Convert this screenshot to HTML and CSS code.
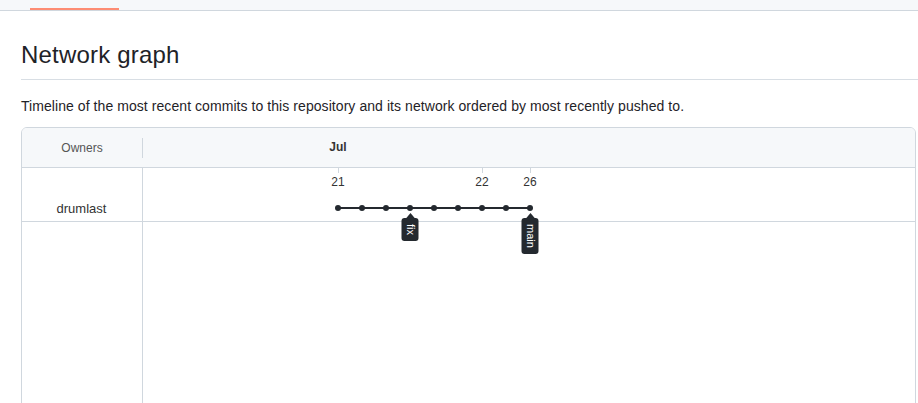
FILE: index.html
```html
<!DOCTYPE html>
<html lang="en">
<head>
<meta charset="utf-8">
<title>Network graph</title>
<link rel="stylesheet" href="styles.css">
</head>
<body>
<div class="topbar"><span class="tab-underline"></span></div>
<main class="content">
  <h2 class="page-title">Network graph</h2>
  <p class="page-desc">Timeline of the most recent commits to this repository and its network ordered by most recently pushed to.</p>
  <section class="graph">
    <div class="graph-head">
      <div class="head-owners">Owners</div>
      <div class="head-timeline">
        <span class="month" style="left:195px">Jul</span>
      </div>
    </div>
    <div class="graph-body">
      <div class="owners-col">
        <div class="owner-row">drumlast</div>
      </div>
      <div class="timeline-col">
        <div class="timeline-row">
          <svg class="commits" width="600" height="53" viewBox="0 0 600 53" aria-hidden="true">
            <g stroke="#d0d7de" stroke-width="1">
              <line x1="195.5" y1="0" x2="195.5" y2="5"/>
              <line x1="339.5" y1="0" x2="339.5" y2="5"/>
              <line x1="387.5" y1="0" x2="387.5" y2="5"/>
            </g>
            <line x1="195" y1="40" x2="387" y2="40" stroke="#24292f" stroke-width="2"/>
            <g fill="#24292f">
              <circle cx="195" cy="40" r="3"/>
              <circle cx="219" cy="40" r="3"/>
              <circle cx="243" cy="40" r="3"/>
              <circle cx="267" cy="40" r="3"/>
              <circle cx="291" cy="40" r="3"/>
              <circle cx="315" cy="40" r="3"/>
              <circle cx="339" cy="40" r="3"/>
              <circle cx="363" cy="40" r="3"/>
              <circle cx="387" cy="40" r="3"/>
            </g>
          </svg>
          <span class="day" style="left:195px">21</span>
          <span class="day" style="left:339px">22</span>
          <span class="day" style="left:387px">26</span>
          <span class="branch-tag" style="left:267px">fix</span>
          <span class="branch-tag" style="left:387px">main</span>
        </div>
      </div>
    </div>
  </section>
</main>
</body>
</html>
```
FILE: styles.css
```css
html, body {
  margin: 0;
  padding: 0;
  overflow: hidden;
  background: #ffffff;
}

body {
  font-family: "Liberation Sans", Arial, sans-serif;
  color: #1f2328;
}

.topbar {
  height: 10px;
  background: #f6f8fa;
  border-bottom: 1px solid #d0d7de;
  display: flex;
  align-items: flex-end;
}

.tab-underline {
  display: block;
  margin-left: 30px;
  width: 89px;
  height: 2px;
  background: #fd8c73;
}

.content {
  padding: 0 0 0 21px;
}

.page-title {
  margin: 26px 0 0 0;
  padding: 0 0 6px 0;
  font-size: 24px;
  font-weight: 400;
  line-height: 36px;
  letter-spacing: 0.2px;
  border-bottom: 1px solid #d8dee4;
}

.page-desc {
  margin: 16px 0 0 0;
  font-size: 14px;
  line-height: 21px;
  letter-spacing: 0.065px;
}

.graph {
  margin: 10px 2px 0 0;
  height: 420px;
  border: 1px solid #d0d7de;
  border-radius: 6px;
  display: flex;
  flex-direction: column;
  overflow: hidden;
}

.graph-head {
  display: grid;
  grid-template-columns: 120px 1fr;
  height: 39px;
  background: #f6f8fa;
  border-bottom: 1px solid #d0d7de;
  font-size: 12px;
}

.head-owners {
  display: flex;
  align-items: center;
  justify-content: center;
  color: #555;
  position: relative;
}

.head-owners::after {
  content: "";
  position: absolute;
  right: -1px;
  top: 10px;
  width: 1px;
  height: 20px;
  background: #d0d7de;
}

.head-timeline {
  position: relative;
  margin-left: 1px;
}

.month {
  position: absolute;
  top: 12px;
  line-height: 14px;
  transform: translateX(-50%);
  font-weight: 700;
  color: #333;
}

.graph-body {
  flex: 1;
  display: grid;
  grid-template-columns: 121px 1fr;
}

.owners-col {
  border-right: 1px solid #d0d7de;
}

.owner-row {
  height: 49px;
  padding-bottom: 4px;
  display: flex;
  align-items: flex-end;
  justify-content: center;
  font-size: 13px;
  line-height: 16px;
  color: #333;
  border-bottom: 1px solid #d0d7de;
  margin-left: -1px;
}

.timeline-row {
  position: relative;
  height: 53px;
  border-bottom: 1px solid #d0d7de;
}

.commits {
  position: absolute;
  left: 0;
  top: 0;
  overflow: visible;
}

.day {
  position: absolute;
  top: 7px;
  font-size: 12px;
  line-height: 14px;
  color: #333;
  transform: translateX(-50%);
}

.branch-tag {
  position: absolute;
  top: 50px;
  width: 17px;
  padding: 6px 0;
  transform: translateX(-50%);
  background: #24292f;
  color: #ffffff;
  border-radius: 3px;
  writing-mode: vertical-rl;
  font-size: 11px;
  line-height: 17px;
  text-align: center;
  z-index: 1;
}

.branch-tag::before {
  content: "";
  position: absolute;
  top: -5px;
  left: 50%;
  margin-left: -5px;
  border-left: 5px solid transparent;
  border-right: 5px solid transparent;
  border-bottom: 6px solid #24292f;
}
```
